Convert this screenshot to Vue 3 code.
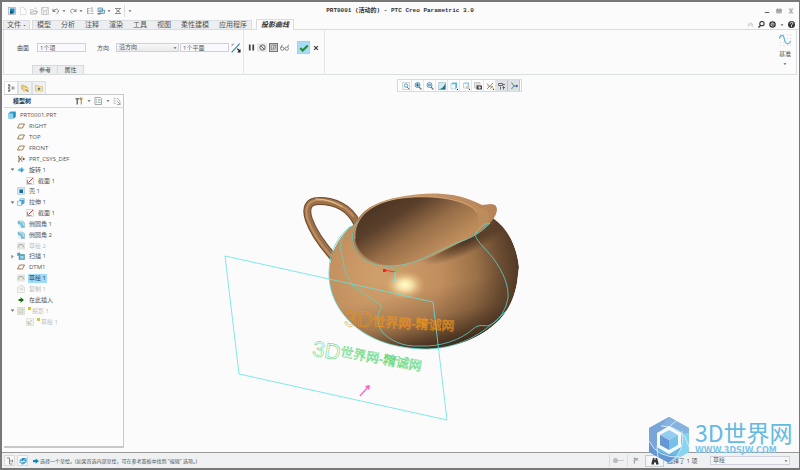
<script setup>
import { h, ref } from 'vue'

const shapes = {
  app: '<rect x="1" y="1" width="14" height="14" fill="#e4e8ea" stroke="#8b9298"/><rect x="4" y="3" width="9" height="10" fill="#1789c4"/><path d="M4 9h5v4H4z" fill="#123c66"/>',
  file: '<path d="M3 1h7l4 4v10H3zM10 1v4h4" fill="#fff" stroke="#c4c7c9"/>',
  open: '<path d="M1 14V5h5l1 2h6v7zM1 14l3-5h12l-3 5z" fill="#eee" stroke="#aaa" /><path d="M8 3q4-3 6 1" fill="none" stroke="#999"/>',
  save: '<path d="M1 1h14v14H1z" fill="#eceeef" stroke="#a9adaf"/><path d="M4 1h8v6H4zM5 10h6v5H5z" fill="#fff" stroke="#a9adaf"/>',
  undo: '<path d="M3 7q7-6 10 0 1 4-4 6" fill="none" stroke="#888" stroke-width="2"/><path d="M1 3v7h7z" fill="#888"/>',
  redo: '<path d="M13 7Q6 1 3 7q-1 4 4 6" fill="none" stroke="#999" stroke-width="2"/><path d="M15 3v7H8z" fill="#999"/>',
  regen: '<path d="M3 2v12M3 3h4M3 8h4M3 13h4M9 8h6M9 13h6M9 3l3-2v5" fill="none" stroke="#aaa" stroke-width="2"/>',
  windows: '<path d="M2 2h9v7H2zM6 6h9v7H6z" fill="#bfe2ef" stroke="#5b8ea4" stroke-width="1.5"/><path d="M1 12h6v3H1z" fill="#777"/>',
  close: '<path d="M2 3h12M2 13h12M4 5l8 6M12 5l-8 6" stroke="#777" stroke-width="1.7"/>',
  down: '<path d="M2 5h12l-6 7z" fill="#666"/>',
  right: '<path d="M4 2v12l8-6z" fill="#888"/>',
  min: '<path d="M2 12h12" stroke="#555" stroke-width="2.5"/>',
  max: '<path d="M2 3h12v10H2zM2 6h12M5 6v4h6V6" fill="none" stroke="#555" stroke-width="1.5"/>',
  up: '<path d="M2 9l6-5 6 5M2 13l6-5 6 5" fill="none" stroke="#aaa" stroke-width="1.5"/>',
  search: '<circle cx="9" cy="6" r="5" fill="none" stroke="#333" stroke-width="2.5"/><path d="M6 10l-5 5" stroke="#333" stroke-width="3"/>',
  globe: '<circle cx="8" cy="8" r="6" fill="#eee" stroke="#333" stroke-width="3"/><path d="M4 7h8M6 10h5" stroke="#333" stroke-width="2"/>',
  help: '<circle cx="8" cy="8" r="8" fill="#333"/><path d="M5 6q0-3 3-3t3 2.500q0 2-3 3.500v2M8 12v2" fill="none" stroke="#fff" stroke-width="2"/>',
  flip: '<path d="M1 15L14 1" stroke="#3987aa" stroke-width="2"/><path d="M1 1l5 0-5 5z" fill="#aaa"/><path d="M15 15h-5l5-6z" fill="#222"/><path d="M10 9l5 5" stroke="#222" stroke-width="2"/>',
  pause: '<path d="M4 1v14M12 1v14" stroke="#444" stroke-width="4"/>',
  none: '<circle cx="8" cy="8" r="6" fill="none" stroke="#555" stroke-width="2"/><path d="M4 4l8 8" stroke="#555" stroke-width="2"/>',
  preview: '<path d="M1 1h14v14H1z" fill="#d5d5d5" stroke="#777" stroke-width="2"/><path d="M4 4v8M4 12q5 0 5-7M8 12q5-1 4-8M6 4h6" fill="none" stroke="#777" stroke-width="1.3"/>',
  glasses: '<circle cx="4" cy="10" r="3" fill="none" stroke="#777" stroke-width="1.5"/><circle cx="12" cy="10" r="3" fill="none" stroke="#777" stroke-width="1.500"/><path d="M7 10h2M1 9l3-6M14 7l1-4" fill="none" stroke="#777" stroke-width="1.5"/>',
  check: '<path d="M2 8l4 4 8-8" fill="none" stroke="#2b8a26" stroke-width="3.500"/>',
  cross: '<path d="M3 3l10 10M13 3L3 13" stroke="#444" stroke-width="3.5"/>',
  datum: '<path d="M1 1h1M6 1h1M11 1h1M15 1h1M1 6h1M11 6h1M15 6h1M1 11h1M6 11h1M15 15h1M6 15h1M1 15h1M11 15h1" stroke="#aaa"/><path d="M0 6C3 0 6 1 7 6C8 13 12 16 16 9" fill="none" stroke="#55b4da" stroke-width="1.5"/>',
  fit: '<path d="M1 1h14v14H1z" fill="#f5f8f9" stroke="#a4afb5"/><circle cx="8" cy="7" r="3.500" fill="#d8f1fa" stroke="#5790aa" stroke-width="1.5"/><path d="M10 10l5 5" stroke="#777" stroke-width="2"/>',
  zoomin: '<circle cx="7" cy="6" r="5" fill="#bfe8f8" stroke="#3b7f9e" stroke-width="1.5"/><path d="M4 6h6M7 3v6" stroke="#1d5c7a" stroke-width="1.800"/><path d="M10 10l5 5" stroke="#777" stroke-width="2.5"/>',
  zoomout: '<circle cx="7" cy="6" r="5" fill="#d8f0f8" stroke="#3b7f9e" stroke-width="1.5"/><path d="M4 6h6" stroke="#1d5c7a" stroke-width="1.8"/><path d="M10 10l5 5" stroke="#777" stroke-width="2.5"/>',
  repaint: '<path d="M1 1h14v14H1z" fill="#cfeaf3" stroke="#8aa"/><path d="M15 2v13H1q10-2 14-13z" fill="#23708f"/>',
  style: '<path d="M2 4l3-3h9v10l-3 3H2z" fill="#54b8d8"/><path d="M2 4h9v10H2z" fill="#f4fbfd" stroke="#79bdd2"/><path d="M13 16h3v-3z" fill="#222"/>',
  views: '<path d="M3 3l2-2h9v9l-2 2H3z" fill="#8dcbe0"/><path d="M3 3h9v9H3z" fill="#f4fbfd" stroke="#79bdd2"/><path d="M8 8h7v6H8z" fill="#ccc"/><path d="M13 16h3v-3z" fill="#222"/>',
  manager: '<path d="M1 1h11v11H1z" fill="#f1f1ee" stroke="#999"/><path d="M3 4h7M3 7h7" stroke="#aaa"/><path d="M5 7h11v8H5z" fill="#444"/><circle cx="11" cy="11" r="2.500" fill="#ddd"/>',
  axes: '<path d="M2 14L14 2M2 3l3 4M8 7l6 6M14 8l-6 5M3 8h4" stroke="#a08052" stroke-width="1.8"/><path d="M13 16h3v-3z" fill="#222"/>',
  notes: '<path d="M1 3h8v4H1zM9 5h5M9 11h5M11 8v7M5 9v6" fill="none" stroke="#555" stroke-width="1.7"/>',
  spin: '<path d="M3 1l5 7-5 6" fill="none" stroke="#3a9b4d" stroke-width="2"/><path d="M8 8h8" stroke="#d44" stroke-width="2"/><circle cx="8" cy="8" r="2" fill="#489fd0"/><path d="M12 5l4 3-4 3z" fill="#458"/>',
  treeTab: '<path d="M4 2v12M4 4h4M4 12h4" fill="none" stroke="#777" stroke-width="1.5"/><circle cx="4" cy="2" r="2" fill="#777"/><circle cx="4" cy="8" r="2" fill="#777"/><circle cx="4" cy="14" r="2" fill="#777"/><circle cx="12" cy="8" r="2.500" fill="none" stroke="#666" stroke-width="1.5"/>',
  folders: '<path d="M1 2h4l1 2h5v6H1z" fill="#f0cf85" stroke="#c9a04f"/><path d="M4 5h4l1 2h5v7H4z" fill="#f8df9c" stroke="#c9a04f"/><path d="M9 11l6 4" stroke="#8f7235" stroke-width="2"/>',
  favorite: '<path d="M1 3h5l1 2h8v9H1z" fill="#fae6ae" stroke="#c9a04f"/><path d="M8 6l1 2.500h3l-2.500 1.500 1 3L8 11l-2.500 2 1-3L4 8.500h3z" fill="#28739e"/>',
  tools: '<path d="M1 2h8v3H6v10H3V5H1z" fill="#77716a"/><path d="M11 1v4h3V1M12.500 5v10" stroke="#a3823f" stroke-width="2" fill="none"/>',
  list: '<path d="M2 1h11l2 2v12H2z" fill="#fff" stroke="#858e92" stroke-width="1.5"/><path d="M4 5h2M8 5h5M4 8h2M8 8h5M4 11h2M8 11h5" stroke="#77949e" stroke-width="1.3"/>',
  filter: '<path d="M2 1v13M2 3h5M2 8h5M2 13h5" stroke="#aaa"/><path d="M8 2l6 6M8 8l7 7M14 9v6H8" fill="none" stroke="#aaa" stroke-width="2"/>',
  part: '<path d="M1 5l4-4h10v10l-4 4H1z" fill="#2b9bc9"/><path d="M1 5h10v10H1z" fill="#8bd6ee"/><path d="M11 5l4-4v10l-4 4z" fill="#2388b5"/>',
  plane: '<path d="M5 4h10l-4 8H1z" fill="#fffaf0" stroke="#8a6a3e" stroke-width="1.7"/>',
  csys: '<path d="M2 2l9 12M11 2L2 14M4 8h11M4 1v14" stroke="#816b4b" stroke-width="1.5"/><path d="M12 5l4 3-4 3z" fill="#654f36"/>',
  revolve: '<path d="M1 8l6-4v8z" fill="#58aecd"/><path d="M5 6l5-4 5 6-5 5-5-3z" fill="#7cc6df"/><path d="M8 5l4 3-4 4z" fill="#2c86ae"/>',
  sketch: '<path d="M1 1h14v14H1z" fill="#f7f7f7" stroke="#bbb"/><path d="M3 13V6M3 13h8" stroke="#777" stroke-width="1.5"/><path d="M5 11l9-9" stroke="#a34848" stroke-width="2"/>',
  shell: '<path d="M1 1h14v14H1z" fill="#d3e6ee" stroke="#9fc0cd"/><path d="M5 5h7v7H5z" fill="#156b99"/>',
  extrude: '<path d="M5 1h10v9l-3 3H5z" fill="#4aa6ca"/><path d="M1 6h8v9H1z" fill="#e9f7fb" stroke="#4b9abb"/><path d="M5 3h9" stroke="#cce" stroke-width="2"/>',
  round: '<path d="M2 2h9l4 4v9H8q0-6-6-7z" fill="#76c3df" stroke="#79adbf"/><path d="M2 8q6 0 6 7H2z" fill="#e8eff1"/><path d="M5 2q8 1 9 9" fill="none" stroke="#d4f2fc" stroke-width="2"/>',
  curve: '<path d="M0 1h16v14H0z" fill="#e4e6e1"/><path d="M2 11l3-6h6l3 6" fill="none" stroke="#9aa193" stroke-width="1.500"/>',
  sweep: '<path d="M1 2h5v3h9v10H4V7H1z" fill="#55a7c7" stroke="#4184a0"/><path d="M7 8h6v5H7z" fill="#a8dcee"/>',
  copy: '<path d="M1 4h4l1-3h6v3h3v11H1z" fill="#f4f5ef" stroke="#c8cbbd"/><path d="M4 8l7-3v6z" fill="#d8dacd"/>',
  insert: '<path d="M3 6h4V2l7 6-7 6v-4H3z" fill="#2b8c22"/><path d="M5 8h7" stroke="#103d0c" stroke-width="2"/>',
  project: '<path d="M1 1h14v14H1z" fill="#eceee5" stroke="#c4c8b9"/><path d="M4 4h8v8H4zM4 12l8-8" fill="none" stroke="#aaae9d"/>',
  fadedSketch: '<path d="M1 1h14v14H1z" fill="#f4f5ee" stroke="#cbcdbd"/><path d="M4 12l8-8M4 6v6h7" fill="none" stroke="#aeb39e" stroke-width="1.5"/>',
  dock: '<path d="M2 2h5v12M7 8h6M7 14h6M13 5v6" fill="none" stroke="#777" stroke-width="1.700"/>',
  browser: '<circle cx="7" cy="9" r="6" fill="#5cabd0"/><path d="M6 2h9v9H6z" fill="#348cba"/><path d="M2 14L14 3M3 9h10" stroke="#eaf7fc" stroke-width="1.6"/>',
  prompt: '<path d="M0 5h7V1l9 7-9 7v-4H0z" fill="#1687b7"/>',
  flag: '<path d="M3 1v14" stroke="#888" stroke-width="2"/><path d="M4 2h9l-3 3 3 3H4z" fill="#aaa"/>',
  binoculars: '<path d="M4 2h3v4h2V2h3l3 10v3h-5v-4H6v4H1v-3z" fill="#333"/>',
}
const Icon = (props) => h('svg', { viewBox: '0 0 16 16', 'aria-hidden': 'true', innerHTML: shapes[props.name] })
Icon.props = ['name']

const quick = ['app', 'file', 'open', 'save', 'undo', 'down', 'redo', 'down', 'regen', 'windows', 'down', 'close']
const menus = ['模型', '分析', '注释', '渲染', '工具', '视图', '柔性建模', '应用程序']
const viewTools = ['fit', 'zoomin', 'zoomout', 'repaint', 'style', 'views', 'manager', 'axes', 'notes', 'spin']
const direction = ref('沿方向')
const filter = ref('草绘')
const tree = [
  { icon: 'part', text: 'PRT0001.PRT', level: 0 },
  { icon: 'plane', text: 'RIGHT', level: 1 },
  { icon: 'plane', text: 'TOP', level: 1 },
  { icon: 'plane', text: 'FRONT', level: 1 },
  { icon: 'csys', text: 'PRT_CSYS_DEF', level: 1 },
  { icon: 'revolve', text: '旋转 1', level: 1, toggle: 'down' },
  { icon: 'sketch', text: '截面 1', level: 2 },
  { icon: 'shell', text: '壳 1', level: 1 },
  { icon: 'extrude', text: '拉伸 1', level: 1, toggle: 'down' },
  { icon: 'sketch', text: '截面 1', level: 2 },
  { icon: 'round', text: '倒圆角 1', level: 1 },
  { icon: 'round', text: '倒圆角 2', level: 1 },
  { icon: 'curve', text: '草绘 2', level: 1, faded: true },
  { icon: 'sweep', text: '扫描 1', level: 1, toggle: 'right' },
  { icon: 'plane', text: 'DTM1', level: 1 },
  { icon: 'curve', text: '草绘 1', level: 1, selected: true },
  { icon: 'copy', text: '复制 1', level: 1, faded: true },
  { icon: 'insert', text: '在此插入', level: 1 },
  { icon: 'project', text: '投影 1', level: 1, toggle: 'down', faded: true, mark: true },
  { icon: 'fadedSketch', text: '草绘 1', level: 2, faded: true, mark: true },
]
</script>

<template>
  <div class="window">
    <header class="titlebar">
      <div class="quick">
        <button v-for="(name, i) in quick" :key="i" :class="{ narrow: name === 'down' }" :aria-label="name"><Icon :name="name" /></button>
        <span class="bar"></span>
        <button class="narrow" aria-label="more"><Icon name="down" /></button>
      </div>
      <h1>PRT0001 (活动的) - PTC Creo Parametric 3.0</h1>
      <div class="winbtns">
        <button v-for="name in ['min', 'max', 'close']" :key="name" :aria-label="name"><Icon :name="name" /></button>
      </div>
    </header>

    <nav class="tabs">
      <button class="filemenu">文件<Icon name="down" /></button>
      <div class="menus"><button v-for="m in menus" :key="m">{{ m }}</button></div>
      <button class="active">投影曲线</button>
      <div class="helpers">
        <button aria-label="collapse"><Icon name="up" /></button>
        <button aria-label="search"><Icon name="search" /></button>
        <button aria-label="online"><Icon name="globe" /></button>
        <button class="narrow" aria-label="more"><Icon name="down" /></button>
        <button aria-label="help"><Icon name="help" /></button>
      </div>
    </nav>

    <section class="ribbon">
      <div class="group fields">
        <div class="row">
          <label for="surface">曲面</label>
          <input id="surface" class="surface" value="1个项" />
          <label for="direction">方向</label>
          <span class="drop wide">
            <select id="direction" v-model="direction"><option>沿方向</option></select>
            <Icon name="down" />
          </span>
          <input aria-label="平面" class="ref" value="1个平面" />
          <button class="flip" aria-label="flip"><Icon name="flip" /></button>
        </div>
        <div class="subtabs"><button>参考</button><button>属性</button></div>
      </div>
      <div class="group">
        <div class="row actions">
          <button aria-label="pause"><Icon name="pause" /></button>
          <button class="tinted" aria-label="none"><Icon name="none" /></button>
          <button aria-label="preview"><Icon name="preview" /></button>
          <button aria-label="verify"><Icon name="glasses" /></button>
          <button class="ok" aria-label="accept"><Icon name="check" /></button>
          <button class="cancel" aria-label="cancel"><Icon name="cross" /></button>
        </div>
      </div>
      <button class="datum"><Icon name="datum" /><span>基准</span><Icon name="down" class="tiny" /></button>
    </section>

    <main class="body">
      <aside class="side">
        <div class="sidetabs">
          <button v-for="(name, i) in ['treeTab', 'folders', 'favorite']" :key="name" :class="{ on: i === 0 }" :aria-label="name"><Icon :name="name" /></button>
        </div>
        <div class="panel">
          <div class="panelhead">
            <h2>模型树</h2>
            <button aria-label="settings"><Icon name="tools" /></button>
            <button class="narrow" aria-label="more"><Icon name="down" /></button>
            <button aria-label="show"><Icon name="list" /></button>
            <button class="narrow" aria-label="more"><Icon name="down" /></button>
            <button aria-label="filter"><Icon name="filter" /></button>
          </div>
          <ul class="tree">
            <li v-for="(n, i) in tree" :key="i" :class="['level' + n.level, { faded: n.faded, selected: n.selected }]">
              <span v-if="n.level" class="toggle"><Icon v-if="n.toggle" :name="n.toggle" /></span>
              <Icon :name="n.icon" class="node" />
              <i v-if="n.mark" class="mark"></i>
              <span class="name">{{ n.text }}</span>
            </li>
          </ul>
        </div>
      </aside>

      <section class="work">
        <div class="viewbar">
          <button v-for="(name, i) in viewTools" :key="name" :class="{ on: i > 7 }" :aria-label="name"><Icon :name="name" /></button>
        </div>
        <svg class="scene" viewBox="124 92 675 360">
          <defs>
            <radialGradient id="clay" gradientUnits="userSpaceOnUse" cx="380" cy="276" r="146">
              <stop offset="0" stop-color="#d0a06c" />
              <stop offset=".42" stop-color="#c08e5d" />
              <stop offset=".66" stop-color="#9b7148" />
              <stop offset=".84" stop-color="#694b31" />
              <stop offset="1" stop-color="#493321" />
            </radialGradient>
            <linearGradient id="under" gradientUnits="userSpaceOnUse" x1="400" y1="295" x2="412" y2="350">
              <stop offset="0" stop-color="#4a3220" stop-opacity="0" />
              <stop offset=".5" stop-color="#4a3220" stop-opacity=".25" />
              <stop offset="1" stop-color="#3b2819" stop-opacity=".9" />
            </linearGradient>
            <linearGradient id="inside" gradientUnits="userSpaceOnUse" x1="382" y1="196" x2="426" y2="266">
              <stop offset="0" stop-color="#493323" />
              <stop offset=".3" stop-color="#5b402b" />
              <stop offset=".62" stop-color="#9a7049" />
              <stop offset="1" stop-color="#c6935f" />
            </linearGradient>
            <linearGradient id="lip" x1="0" y1="0" x2="1" y2="0">
              <stop offset="0" stop-color="#a97a4e" />
              <stop offset=".4" stop-color="#c9976a" />
              <stop offset="1" stop-color="#b58355" />
            </linearGradient>
            <radialGradient id="shine">
              <stop offset="0" stop-color="#ffffc8" />
              <stop offset=".35" stop-color="#fae6ae" stop-opacity=".9" />
              <stop offset="1" stop-color="#d9a870" stop-opacity="0" />
            </radialGradient>
            <radialGradient id="shade">
              <stop offset="0" stop-color="#402c1c" stop-opacity=".9" />
              <stop offset=".5" stop-color="#493321" stop-opacity=".55" />
              <stop offset="1" stop-color="#493321" stop-opacity="0" />
            </radialGradient>
            <path id="bowl" d="M357 222C341 232 330 250 329 273C329 297 341 315 357 328C376 343 402 349 427 349C457 348 481 337 496 323C507 313 514 300 517 283L519 267C517 249 510 230 493 218L440 205Z" />
            <clipPath id="bowlClip"><use href="#bowl" /></clipPath>
          </defs>
          <g fill="none" stroke-linecap="round">
            <path d="M357 223C349 207 334 201 319 201C308 201 305 208 309 220C314 234 324 247 335 259" stroke="#6b4b30" stroke-width="8" />
            <path d="M357 223C349 207 334 201 319 201C308 201 305 208 309 220C314 234 324 247 335 259" stroke="#9c7049" stroke-width="6" />
            <path d="M353 216C345 205 331 200 319 200C308 200 304 208 308 220C313 234 322 246 331 256" stroke="#c08f60" stroke-width="2" />
            <path d="M316 199C327 199 336 203 342 207" stroke="#ecc695" stroke-width="1" />
          </g>
          <g clip-path="url(#bowlClip)">
            <use href="#bowl" fill="url(#clay)" />
            <use href="#bowl" fill="url(#under)" />
            <ellipse cx="466" cy="241" rx="50" ry="13" transform="rotate(-25 466 241)" fill="url(#shade)" />
            <ellipse cx="405" cy="285" rx="21" ry="15" fill="url(#shine)" />
          </g>
          <path d="M352 238C352 222 362 209 381 202C399 195 430 191 453 195C464 197 474 201 482 205L491 204Q497 204 497 210Q496 217 489 224Q478 235 461 242C440 252 420 266 390 267C370 266 353 257 352 238Z" fill="url(#lip)" />
          <path d="M355 239C353 218 371 202 402 198C435 194 468 200 477 212C483 223 478 232 464 240C442 250 419 263 397 265C373 267 357 254 355 239Z" fill="url(#inside)" />
          <path d="M467 202Q480 208 478 224Q476 234 463 240Q480 234 488 221Q493 211 480 208Z" fill="#bd8c5d" />
          <path d="M355 239C353 218 371 202 402 198C435 194 468 200 477 212" fill="none" stroke="#dfb37f" stroke-width=".8" />
          <g fill="none" stroke="#5cd3cb" stroke-width=".8">
            <path d="M357 222C352 230 351 240 355 248C362 263 381 269 402 265C421 262 443 247 465 240C475 236 484 230 490 223Q480 224 475 235C478 243 486 249 493 258C503 272 509 285 508 298Q507 306 502 314Q495 324 487 326Q478 324 473 329C461 340 440 347 420 346C402 347 390 340 382 332C376 322 377 314 382 306L357 289C349 282 344 272 343 259C338 246 341 236 350 227" />
            <path d="M351 226C338 236 329 251 329 273C329 297 341 315 357 328C376 343 402 349 427 349C457 348 481 337 506 311" />
            <path d="M225 256L433 302L447 420L239 374Z" stroke="#62e3e5" />
          </g>
          <path d="M395 272L384 270" stroke="#ee3d36" />
          <rect x="383" y="269" width="3" height="3" fill="#f02828" />
          <path d="M395 272L400 266" stroke="#5bd454" />
          <path d="M395 272V280" stroke="#67e5e5" />
          <rect x="394" y="279" width="2" height="3" fill="#67eeee" />
          <g class="outline green" transform="rotate(10 315 353)">
            <text x="312" y="356" class="big">3D</text><text x="340" y="352" class="cjk">世界网-精诚网</text>
          </g>
          <g class="outline orange" transform="rotate(3 347 325)">
            <text x="344" y="326" class="big">3D</text><text x="372" y="325" class="cjk">世界网-精诚网</text>
          </g>
          <path d="M360 396L368 387" stroke="#ef75c4" stroke-width="1.500" />
          <path d="M370 385L369 390L365 386Z" fill="#ff5fc4" />
        </svg>
      </section>
    </main>

    <footer class="status">
      <button class="sq" aria-label="navigator"><Icon name="dock" /></button>
      <button class="sq" aria-label="browser"><Icon name="browser" /></button>
      <p><Icon name="prompt" />选择一个草绘。(如果首选内部草绘，可在参考面板中找到 "编辑" 选项。)</p>
      <div class="state"><i class="dot"></i><i class="dash"></i></div>
      <div class="state"><Icon name="flag" /></div>
      <button class="find" aria-label="find"><Icon name="binoculars" /></button>
      <span class="count">选择了 1 项</span>
      <span class="drop low">
        <select v-model="filter" aria-label="filter"><option>草绘</option></select>
        <Icon name="down" />
      </span>
    </footer>

    <div class="brand">
      <svg viewBox="0 0 42 48">
        <path d="M21 1L41 12V36L21 47L1 36V12Z" fill="#6cbbe6" />
        <path d="M21 1L1 12V36L10 41Q6 22 28 5Z" fill="#7aa5da" />
        <path d="M1 36V25Q9 40 32 40L21 47Z" fill="#6496d1" />
        <path d="M21 1L41 12V31Q36 12 13 10Z" fill="#86b2e0" />
        <path d="M41 17V36L21 47Q37 38 33 18Z" fill="#86d4f1" />
        <path d="M1 25Q9 42 32 41M13 10Q36 10 41 31M10 41Q4 22 28 5M34 15Q38 36 21 47" fill="none" stroke="#d9edfa" stroke-width=".9" />
        <path d="M21 10L33 17V31L21 38L9 31V17Z" fill="#f5fafd" />
        <path d="M21 14L30 19L21 24L12 19Z" fill="#94cdf0" />
        <path d="M12 19L21 24V34L12 29Z" fill="#6698d3" />
        <path d="M30 19L21 24V34L30 29Z" fill="#76c1e9" />
      </svg>
      <div class="brandtext"><strong>3D世界网</strong><small>WWW.3DSJW.COM</small></div>
    </div>
  </div>
</template>

<style>
body { background: #fbfbfb; }
</style>

<style scoped>
* { box-sizing: border-box; }
.window {
  position: relative;
  display: flex;
  flex-direction: column;
  min-height: 100vh;
  border: solid #777;
  border-width: 2px 1px 2px 2px;
  background: #fbfbfb;
  color: #555;
  font: 6px/8px "Open Sans", "Noto Sans CJK SC", sans-serif;
}
button, input, select { margin: 0; padding: 0; border: 0; background: none; color: inherit; font: inherit; }
button { display: flex; align-items: center; justify-content: center; flex: none; }
svg { display: block; flex: none; width: 8px; height: 8px; }
h1, h2, p, ul { margin: 0; padding: 0; }
.narrow svg { width: 4px; height: 4px; }

.titlebar { display: grid; grid-template-columns: 1fr auto 1fr; align-items: center; height: 17px; padding: 0 5px 0 4px; }
.quick { display: flex; align-items: center; }
.quick button { width: 11px; }
.quick button.narrow { width: 6px; }
.bar { width: 1px; height: 12px; margin: 0 2px 0 1px; background: #ddd; }
h1 { color: #333; font: bold 6px/8px "Liberation Mono", "Noto Sans CJK SC", monospace; }
.winbtns { display: flex; justify-content: flex-end; gap: 6px; }
.winbtns svg { width: 6px; height: 6px; }

.tabs { display: flex; align-items: flex-end; height: 11px; padding: 0 4px 0 1px; border-bottom: 1px solid #d9dcde; font-size: 7px; }
.tabs > button, .menus { height: 9px; border: 1px solid #dadddf; border-bottom: 0; background: #eceef0; }
.filemenu { width: 27px; gap: 2px; }
.filemenu svg { width: 3px; height: 3px; }
.menus { display: flex; align-items: center; gap: 10px; margin-left: 2px; padding: 0 4px; }
.tabs > .active { height: 11px; margin: 0 0 -1px 4px; padding: 0 4px; background: #fbfbfb; color: #333; font-weight: bold; font-style: italic; }
.helpers { display: flex; align-items: center; gap: 4px; margin-left: auto; height: 9px; }
.helpers svg { width: 7px; height: 7px; }
.helpers .narrow svg { width: 4px; height: 4px; }

.ribbon { display: flex; height: 45px; margin: 0 2px 0 1px; border: solid #dcdfe0; border-width: 0 1px 1px; }
.group { display: flex; flex-direction: column; justify-content: space-between; padding-top: 11px; border-right: 1px solid #e2e4e6; }
.row { display: flex; align-items: center; height: 13px; }
.fields .row { padding: 0 2px 0 13px; }
.row label { width: 12px; }
input, .drop { height: 9px; border: 1px solid #cfd0dc; background: #f9f9ff; }
input { width: 49px; padding: 0 2px; }
.surface { margin: 0 11px 0 8px; }
.drop { position: relative; display: flex; align-items: center; background: linear-gradient(#f7f7f7, #e9ebec); }
.drop select { width: 100%; height: 7px; padding: 0 2px; appearance: none; line-height: 7px; }
.drop svg { position: absolute; right: 1px; width: 4px; height: 4px; }
.wide { width: 63px; margin: 0 1px 0 7px; }
.flip { margin-left: 2px; }
.flip svg { width: 10px; height: 10px; }
.subtabs { display: flex; padding-left: 28px; }
.subtabs button { width: 26px; height: 9px; border: 1px solid #d6d9db; border-width: 1px 1px 0; background: #eceef0; }
.subtabs button + button { border-left: 0; }
.actions { padding: 0 3px 0 2px; gap: 1px; }
.actions button { width: 10px; height: 9px; }
.actions .tinted { background: #e9e9e9; }
.actions svg { width: 7px; height: 7px; }
.actions button:nth-child(3) svg, .actions button:nth-child(4) svg { width: 9px; height: 9px; }
.actions .ok { width: 13px; height: 13px; margin-left: 7px; border: 1px solid #9fd3ee; background: #a7dcf7; }
.actions .ok svg { width: 10px; height: 10px; }
.actions .cancel svg { width: 6px; height: 6px; }
.datum { flex-direction: column; justify-content: flex-start; gap: 4px; margin-left: auto; padding: 4px 5px 0 0; }
.datum svg { width: 12px; height: 12px; }
.datum .tiny { width: 4px; height: 4px; }

.body { display: flex; flex: 1; }
.side { display: flex; flex-direction: column; width: 122px; padding: 6px 0 4px 2px; }
.sidetabs { display: flex; }
.sidetabs button { width: 14px; height: 13px; border: 1px solid #dee1e3; border-bottom: 0; background: #eff1f2; }
.sidetabs button.on { background: #fdfdfd; }
.panel { flex: 1; border: solid #c6c8ca; border-width: 1px 1px 2px 0; background: #fcfcfc; }
.panelhead { display: flex; align-items: center; height: 13px; padding: 0 1px 0 9px; border-bottom: 1px solid #d6d8da; }
h2 { flex: 1; color: #333; font: bold 6px/8px "Noto Sans CJK SC", sans-serif; }
.panelhead button { width: 10px; }
.panelhead .narrow { width: 9px; }
.tree { display: grid; grid-auto-rows: 1fr; height: 219px; padding-top: 2px; list-style: none; }
.tree li { display: flex; align-items: center; padding-left: 4px; }
.toggle { width: 9px; }
.toggle svg { width: 5px; height: 5px; margin-left: 2px; }
.tree .level2 .toggle { width: 18px; }
.node { margin-right: 3px; }
.name { padding: 0 1px; }
.faded { color: #bbb; }
.selected .name { background: #9fdcf8; color: #333; line-height: 9px; }
.mark { width: 3px; height: 3px; margin-top: -4px; background: #d3c72d; }

.work { display: flex; flex: 1; flex-direction: column; min-width: 0; }
.viewbar { display: flex; align-self: center; height: 13px; margin: 4px 4px 0 0; padding: 0 1px 0 2px; border: 1px solid #d8dbdd; background: #fdfdfd; }
.viewbar button { width: 12px; border: solid #e3e5e6; border-width: 0 1px 0 0; }
.viewbar .on { background: #dde0e4; border-color: #c0c4c8; }
.scene { flex: 1; width: 100%; height: auto; min-height: 0; }
.outline { fill: none; stroke-width: .5; font-family: "Liberation Sans", "Noto Sans CJK SC", sans-serif; }
.green { stroke: #4fd46b; }
.orange { stroke: #ee9414; }
.big { font-size: 22px; }
.cjk { font-size: 13px; }

.status { display: flex; align-items: center; height: 16px; padding: 0 9px 0 2px; border-top: 1px solid #999; background: #eef0f2; }
.sq { width: 11px; height: 11px; margin-right: 2px; border: 1px solid #d8dadc; background: #f7f7f7; }
.status p { display: flex; flex: 1; align-items: center; gap: 1px; margin-left: 3px; font-size: 5px; white-space: nowrap; }
.status p svg { width: 6px; height: 6px; }
.state { display: flex; align-items: center; justify-content: center; width: 18px; height: 13px; border-left: 1px solid #dcdee0; }
.dot { width: 5px; height: 5px; border-radius: 50%; background: #bbb; }
.dash { width: 6px; height: 1px; background: #ccc; }
.state svg { width: 7px; height: 7px; }
.find { width: 19px; height: 12px; border: 1px solid #c8cacc; background: #f5f5f5; }
.count { width: 43px; margin-left: 3px; white-space: nowrap; }
.low { width: 80px; background: #f5f6f7; }

.brand { position: absolute; right: 5px; bottom: 4px; display: flex; align-items: center; gap: 5px; pointer-events: none; }
.brand svg { width: 42px; height: 48px; }
.brandtext { display: flex; flex-direction: column; gap: 8px; width: 99px; color: #64b9e3; white-space: nowrap; }
.brandtext strong { font: 23px/14px "Noto Sans CJK SC", sans-serif; }
.brandtext small { color: #80c6e8; font: bold 8px/8px "DejaVu Sans", sans-serif; }
</style>
